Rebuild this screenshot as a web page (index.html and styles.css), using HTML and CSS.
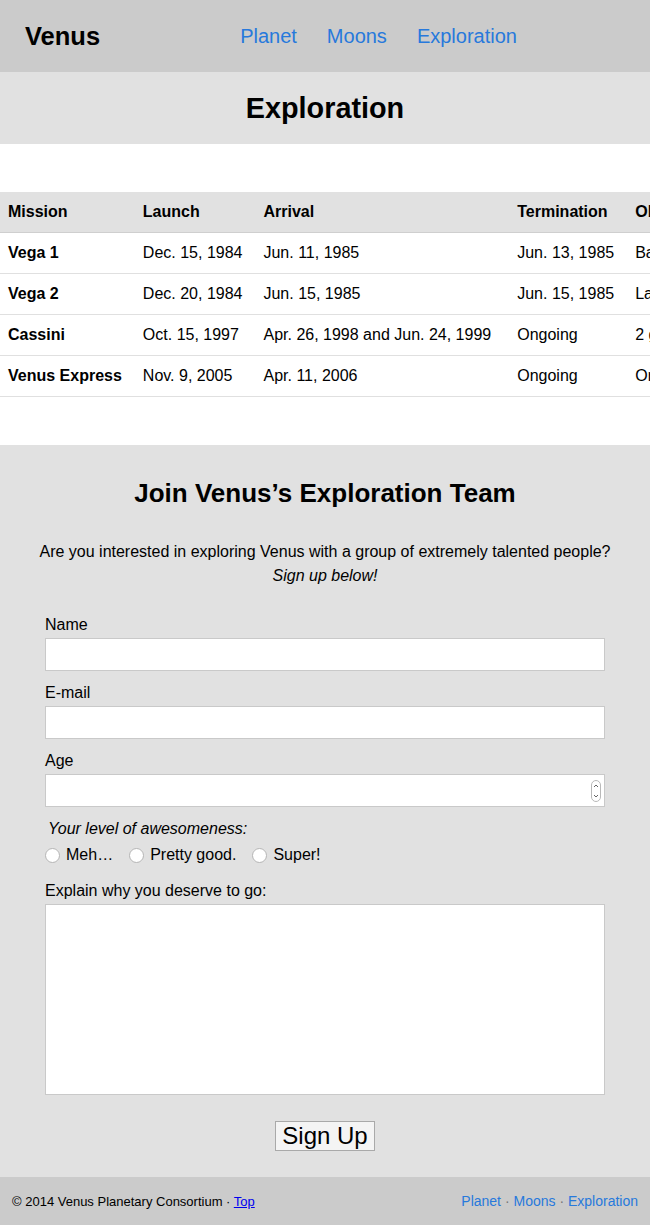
FILE: index.html
```html
<!DOCTYPE html>
<html lang="en">
<head>
<meta charset="utf-8">
<title>Venus — Exploration</title>
<link rel="stylesheet" href="styles.css">
</head>
<body>
<header class="site-header" id="top">
  <a class="logo" href="#">Venus</a>
  <nav class="main-nav">
    <a href="#">Planet</a>
    <a href="#">Moons</a>
    <a href="#">Exploration</a>
  </nav>
</header>

<section class="page-title">
  <h1>Exploration</h1>
</section>

<section class="missions">
  <div class="table-wrap">
    <table class="mission-table">
      <thead>
        <tr>
          <th>Mission</th>
          <th>Launch</th>
          <th class="col-arrival">Arrival</th>
          <th>Termination</th>
          <th>Objective</th>
        </tr>
      </thead>
      <tbody>
        <tr>
          <th>Vega 1</th>
          <td>Dec. 15, 1984</td>
          <td class="col-arrival">Jun. 11, 1985</td>
          <td>Jun. 13, 1985</td>
          <td>Balloon, lander and flyby</td>
        </tr>
        <tr>
          <th>Vega 2</th>
          <td>Dec. 20, 1984</td>
          <td class="col-arrival">Jun. 15, 1985</td>
          <td>Jun. 15, 1985</td>
          <td>Lander, balloon and flyby</td>
        </tr>
        <tr>
          <th>Cassini</th>
          <td>Oct. 15, 1997</td>
          <td class="col-arrival">Apr. 26, 1998 and Jun. 24, 1999</td>
          <td>Ongoing</td>
          <td>2 gravity assist flybys</td>
        </tr>
        <tr>
          <th>Venus Express</th>
          <td>Nov. 9, 2005</td>
          <td class="col-arrival">Apr. 11, 2006</td>
          <td>Ongoing</td>
          <td>Orbiter</td>
        </tr>
      </tbody>
    </table>
  </div>
</section>

<section class="join">
  <h2>Join Venus’s Exploration Team</h2>
  <p class="intro">Are you interested in exploring Venus with a group of extremely talented people?<br><em>Sign up below!</em></p>
  <form class="signup">
    <div class="field">
      <label for="name">Name</label>
      <input id="name" type="text">
    </div>
    <div class="field">
      <label for="email">E-mail</label>
      <input id="email" type="email">
    </div>
    <div class="field">
      <label for="age">Age</label>
      <div class="number-wrap">
        <input id="age" type="number">
        <svg class="spinner" width="10" height="22" viewBox="0 0 10 22" aria-hidden="true">
          <rect x="0.5" y="0.5" width="9" height="21" rx="4.5" fill="#fff" stroke="#b9b9b9"/>
          <path d="M3 7 L5 5 L7 7" fill="none" stroke="#555" stroke-width="0.9"/>
          <path d="M3 15 L5 17 L7 15" fill="none" stroke="#555" stroke-width="0.9"/>
        </svg>
      </div>
    </div>
    <fieldset class="awesome">
      <legend>Your level of awesomeness:</legend>
      <div class="radios">
        <label><input type="radio" name="level">Meh…</label>
        <label><input type="radio" name="level">Pretty good.</label>
        <label><input type="radio" name="level">Super!</label>
      </div>
    </fieldset>
    <div class="field">
      <label for="why">Explain why you deserve to go:</label>
      <textarea id="why"></textarea>
    </div>
    <div class="actions">
      <button type="submit">Sign Up</button>
    </div>
  </form>
</section>

<footer class="site-footer">
  <p class="copy">© 2014 Venus Planetary Consortium · <a href="#top">Top</a></p>
  <nav class="foot-nav">
    <a href="#">Planet</a> · <a href="#">Moons</a> · <a href="#">Exploration</a>
  </nav>
</footer>
</body>
</html>
```

FILE: styles.css
```css
* {
  box-sizing: border-box;
}

html, body {
  margin: 0;
  padding: 0;
}

body {
  font-family: "Liberation Sans", Arial, Helvetica, sans-serif;
  font-size: 16px;
  color: #000;
  background: #fff;
}

a {
  text-decoration: none;
  color: #2779dc;
}

/* Header */
.site-header {
  display: flex;
  align-items: center;
  height: 72px;
  padding: 0 25px;
  background: #cbcbcb;
}

.logo {
  color: #000;
  font-weight: bold;
  font-size: 25.5px;
  line-height: 30px;
}

.main-nav {
  display: flex;
  gap: 30px;
  margin-left: 140px;
}

.main-nav a {
  font-size: 20px;
  line-height: 24px;
}

/* Page title */
.page-title {
  background: #e1e1e1;
  height: 72px;
  display: flex;
  align-items: center;
  justify-content: center;
}

.page-title h1 {
  margin: 0;
  font-size: 28.8px;
  line-height: 32px;
}

/* Missions table */
.missions {
  padding: 48px 0;
}

.table-wrap {
  overflow: hidden;
}

.mission-table {
  border-collapse: collapse;
  white-space: nowrap;
  text-align: left;
}

.mission-table th,
.mission-table td {
  padding: 10px 13px 10px 8px;
  line-height: 20px;
  border-bottom: 1px solid #e0e0e0;
  font-size: 16px;
}

.mission-table thead th {
  background: #e1e1e1;
  border-bottom: 1px solid #cfcfcf;
}

.mission-table tbody th {
  font-weight: bold;
}

.mission-table td {
  font-weight: normal;
}

.mission-table .col-arrival {
  padding-right: 18px;
}

/* Join section */
.join {
  background: #e1e1e1;
  padding: 33px 0 26px;
}

.join h2 {
  margin: 0;
  text-align: center;
  font-size: 26px;
  line-height: 30px;
}

.intro {
  margin: 32px 0 27px;
  text-align: center;
  line-height: 24px;
}

.signup {
  width: 560px;
  margin: 0 auto;
}

.field {
  margin-bottom: 12px;
}

.field > label {
  display: block;
  line-height: 20px;
  margin-bottom: 3px;
}

.field input,
.field textarea {
  display: block;
  width: 100%;
  height: 33px;
  margin: 0;
  border: 1px solid #c9c9c9;
  border-radius: 0;
  background: #fff;
  font: inherit;
  padding: 4px 6px;
  outline: none;
}

.number-wrap {
  position: relative;
}

.number-wrap input {
  appearance: textfield;
  -moz-appearance: textfield;
}

.number-wrap input::-webkit-inner-spin-button,
.number-wrap input::-webkit-outer-spin-button {
  -webkit-appearance: none;
  margin: 0;
}

.spinner {
  position: absolute;
  right: 4px;
  top: 6px;
}

.field textarea {
  height: 191px;
  resize: none;
}

.awesome {
  border: 0;
  margin: 1px 0 16px;
  padding: 0;
  min-width: 0;
}

.awesome legend {
  padding: 0 3px;
  font-style: italic;
  line-height: 20px;
}

.radios {
  display: flex;
  gap: 16px;
  margin-top: 6px;
}

.radios label {
  display: flex;
  align-items: center;
  line-height: 20px;
}

.radios input {
  appearance: none;
  -webkit-appearance: none;
  width: 15px;
  height: 15px;
  margin: 0 6px 0 0;
  border: 1px solid #b5b5b5;
  border-radius: 50%;
  background: #fff;
}

.actions {
  padding-top: 14px;
  text-align: center;
}

.actions button {
  font-family: inherit;
  font-size: 24px;
  line-height: 28px;
  padding: 0 6px;
  margin: 0;
  border: 1px solid #a9a9a9;
  border-radius: 0;
  background: #f4f4f4;
  color: #000;
  vertical-align: top;
}

/* Footer */
.site-footer {
  display: flex;
  align-items: center;
  justify-content: space-between;
  height: 48px;
  padding: 0 12px;
  background: #cbcbcb;
}

.copy {
  margin: 0;
  font-size: 13px;
}

.copy a {
  color: #0000ee;
  text-decoration: underline;
}

.foot-nav {
  font-size: 14px;
  color: #777;
}
```
